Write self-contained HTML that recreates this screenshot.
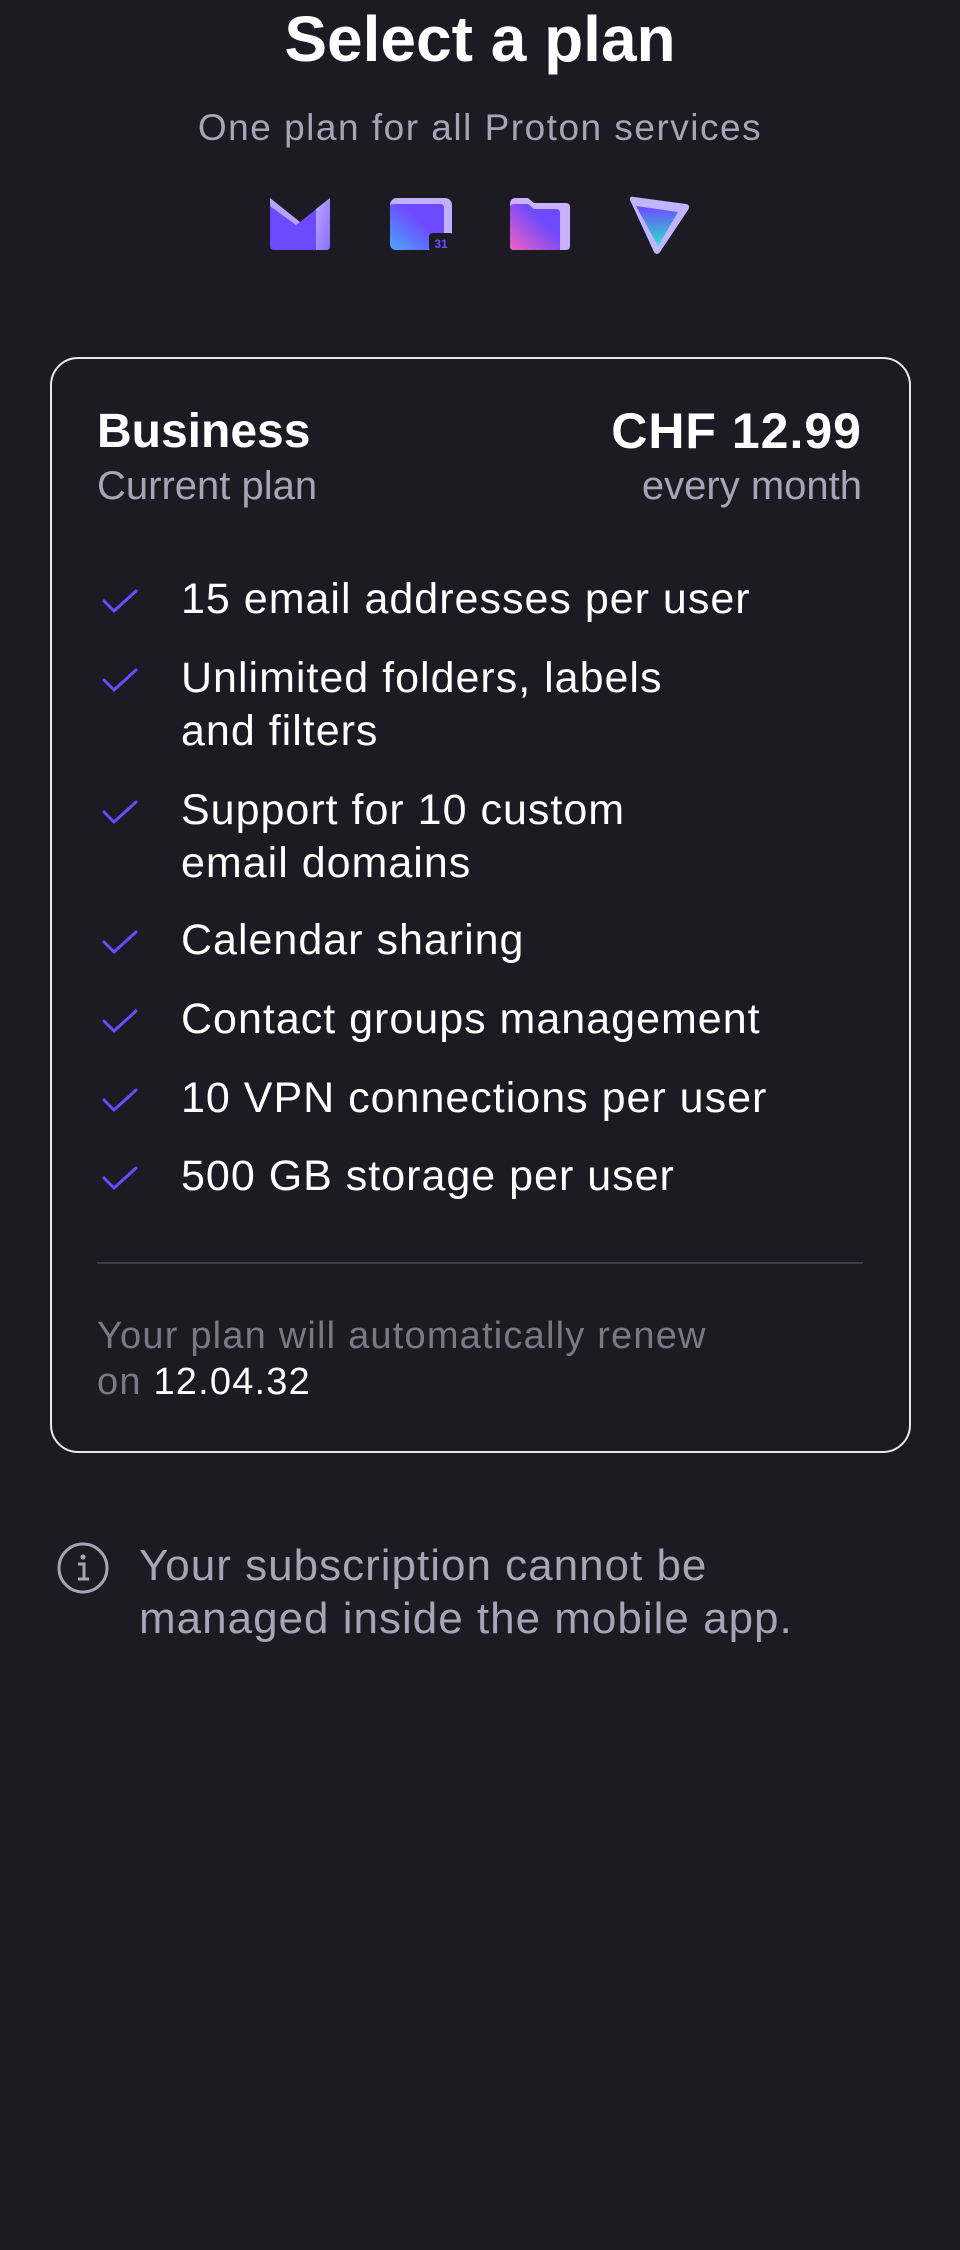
<!DOCTYPE html>
<html><head><meta charset="utf-8"><style>
*{margin:0;padding:0;box-sizing:border-box}
body{width:960px;height:2250px;background:#1c1b24;font-family:"Liberation Sans",sans-serif;color:#fff;position:relative;overflow:hidden}
.a{position:absolute;white-space:nowrap}
.title{left:0;width:960px;text-align:center;top:3px;font-size:64px;font-weight:bold;line-height:72px}
.sub{left:0;width:960px;text-align:center;top:106px;font-size:37px;letter-spacing:1.5px;color:#a7a4b5;line-height:44px}
.card{position:absolute;left:50px;top:357px;width:861px;height:1096px;border:2px solid #e8e8ee;border-radius:28px}
.feat{left:181px;font-size:43px;letter-spacing:1px;line-height:53px;color:#fff}
.gray{color:#a7a4b5}
</style></head><body>
<div class="a title">Select a plan</div>
<div class="a sub">One plan for all Proton services</div>

<svg class="a" style="left:268px;top:196px" width="64" height="56" viewBox="0 0 64 56">
<defs><linearGradient id="m1" x1="0" y1="0" x2="1" y2="1"><stop offset="0" stop-color="#b9a8ff"/><stop offset="1" stop-color="#8a6cff"/></linearGradient></defs>
<path d="M2 2 L32 26 L62 2 V50 Q62 54 58 54 H6 Q2 54 2 50Z" fill="#6d4aff"/>
<path d="M48 13 L62 2 V50 Q62 54 58 54 H48Z" fill="url(#m1)"/>
<path d="M2 2 L32 26 L28 29 L2 10Z" fill="#c9b9ff" opacity=".8"/>
</svg>
<svg class="a" style="left:388px;top:196px" width="66" height="56" viewBox="0 0 66 56">
<defs><linearGradient id="c1" x1="1" y1="0" x2="0" y2="1"><stop offset="0.4" stop-color="#6d4aff"/><stop offset="1" stop-color="#4ba6ff"/></linearGradient></defs>
<rect x="2" y="2" width="62" height="52" rx="7" fill="#c0b0ff"/>
<path d="M2 9 Q2 8 9 8 H52 Q56 8 56 12 V40 L40 54 H9 Q2 54 2 47Z" fill="url(#c1)"/>
<rect x="41" y="37" width="25" height="19" rx="4" fill="#1c1b24"/>
<text x="53" y="52" font-size="12" font-weight="bold" fill="#6d4aff" text-anchor="middle" font-family="Liberation Sans">31</text>
</svg>
<svg class="a" style="left:508px;top:196px" width="64" height="56" viewBox="0 0 64 56">
<defs><linearGradient id="d1" x1="1" y1="0" x2="0" y2="1"><stop offset="0.35" stop-color="#6d4aff"/><stop offset="1" stop-color="#f05fc0"/></linearGradient></defs>
<path d="M2 8 Q2 2 8 2 H20 L26 7 H58 Q62 7 62 11 V50 Q62 54 58 54 H6 Q2 54 2 50Z" fill="#cbb0ff"/>
<path d="M2 12 Q2 8 6 8 H20 L26 13 H48 Q52 13 52 17 V54 H6 Q2 54 2 50Z" fill="url(#d1)"/>
</svg>
<svg class="a" style="left:628px;top:196px" width="64" height="60" viewBox="0 0 64 60">
<defs><linearGradient id="v1" x1="0" y1="0" x2="0" y2="1"><stop offset="0" stop-color="#6d4aff"/><stop offset="1" stop-color="#2ee0c8"/></linearGradient></defs>
<path d="M2 4 Q1 0 6 1 L58 8 Q63 9 60 14 L32 56 Q29 60 26 56Z" fill="#c0b5ff"/>
<path d="M8 10 L50 16 L30 50 Z" fill="url(#v1)"/>
</svg>

<div class="card"></div>
<div class="a" style="left:97px;top:402px;font-size:48px;font-weight:bold;line-height:60px">Business</div>
<div class="a gray" style="left:97px;top:462px;font-size:40px;line-height:48px">Current plan</div>
<div class="a" style="right:98px;top:400px;font-size:50px;letter-spacing:1px;font-weight:bold;line-height:62px">CHF 12.99</div>
<div class="a gray" style="right:98px;top:462px;font-size:40px;line-height:48px">every month</div>

<svg class="a" style="left:0;top:0" width="960" height="1300">
<g fill="none" stroke="#6d4aff" stroke-width="3" stroke-linecap="round" stroke-linejoin="round">
<path d="M104 601 l10 10 l22 -20"/>
<path d="M104 680 l10 10 l22 -20"/>
<path d="M104 812 l10 10 l22 -20"/>
<path d="M104 942 l10 10 l22 -20"/>
<path d="M104 1021 l10 10 l22 -20"/>
<path d="M104 1100 l10 10 l22 -20"/>
<path d="M104 1178 l10 10 l22 -20"/>
</g>
<line x1="97" y1="1263" x2="863" y2="1263" stroke="#3e3c4a" stroke-width="2"/>
</svg>
<div class="a feat" style="top:573px">15 email addresses per user</div>
<div class="a feat" style="top:652px">Unlimited folders, labels<br>and filters</div>
<div class="a feat" style="top:784px">Support for 10 custom<br>email domains</div>
<div class="a feat" style="top:914px">Calendar sharing</div>
<div class="a feat" style="top:993px">Contact groups management</div>
<div class="a feat" style="top:1072px">10 VPN connections per user</div>
<div class="a feat" style="top:1150px">500 GB storage per user</div>

<div class="a" style="left:97px;top:1313px;font-size:38px;letter-spacing:1.2px;line-height:46px;color:#7a7885">Your plan will automatically renew<br>on <span style="color:#fff">12.04.32</span></div>

<svg class="a" style="left:56px;top:1541px" width="54" height="54" viewBox="0 0 54 54">
<circle cx="27" cy="27" r="24" fill="none" stroke="#a7a4b5" stroke-width="3"/>
<circle cx="27" cy="16" r="2.6" fill="#a7a4b5"/>
<path d="M22 23 H28 V38 M22 38 H33" fill="none" stroke="#a7a4b5" stroke-width="3"/>
</svg>
<div class="a gray" style="left:139px;top:1539px;font-size:44px;letter-spacing:1px;line-height:53px">Your subscription cannot be<br>managed inside the mobile app.</div>
</body></html>
